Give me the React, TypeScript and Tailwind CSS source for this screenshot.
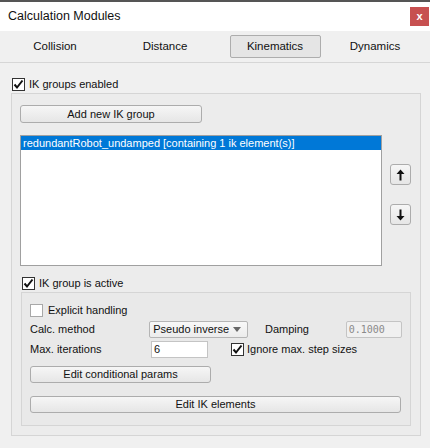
import React from 'react'

const font = { fontFamily: '"Liberation Sans", Arial, sans-serif' }

function Check({ checked }: { checked: boolean }) {
  return (
    <span className="flex h-[13px] w-[13px] shrink-0 items-center justify-center border border-[#333] bg-white">
      {checked && (
        <svg width="11" height="11" viewBox="0 0 11 11">
          <path d="M1.5 5.5 L4 8.5 L9.5 1.5" fill="none" stroke="#111" strokeWidth="2" />
        </svg>
      )}
    </span>
  )
}

function Btn({ children, className = '' }: { children: React.ReactNode; className?: string }) {
  return (
    <div
      className={
        'flex items-center justify-center rounded-[3px] border border-[#acacac] bg-gradient-to-b from-[#f6f6f6] to-[#e6e6e6] text-[11px] leading-none text-[#111] ' +
        className
      }
    >
      {children}
    </div>
  )
}

function Arrow({ up }: { up: boolean }) {
  return (
    <svg width="9" height="12" viewBox="0 0 9 12" style={{ transform: up ? 'none' : 'rotate(180deg)' }}>
      <path d="M4.5 0.5 L8.5 5 L5.5 5 L5.5 11.5 L3.5 11.5 L3.5 5 L0.5 5 Z" fill="#111" />
    </svg>
  )
}

export default function App() {
  return (
    <div className="flex h-[448px] w-[430px] flex-col border-t-2 border-[#555] bg-[#f0f0f0] text-[11px] leading-none text-[#111]" style={font}>
      {/* title bar */}
      <div className="flex h-[29px] items-center justify-between bg-white pl-[8px] pr-[1px]">
        <span className="text-[12.5px] text-[#111]">Calculation Modules</span>
        <div className="flex h-[19px] w-[19px] items-center justify-center bg-[#c75050] text-[11px] font-bold leading-none text-white">
          x
        </div>
      </div>

      {/* tabs */}
      <div className="flex h-[32px] items-center border-b border-[#d6d6d6] text-[11.5px]">
        <div className="flex w-[110px] justify-center">Collision</div>
        <div className="flex w-[110px] justify-center">Distance</div>
        <div className="flex w-[110px] justify-center">
          <div className="flex h-[23px] w-[91px] items-center justify-center rounded-[2px] border border-[#adadad] bg-[#e5e5e5]">
            Kinematics
          </div>
        </div>
        <div className="flex w-[90px] justify-center">Dynamics</div>
      </div>

      {/* content */}
      <div className="flex flex-col px-[11px] pt-[15px]">
        <label className="flex h-[13px] items-center gap-[4px] pl-[1px]">
          <Check checked />
          <span>IK groups enabled</span>
        </label>

        <div className="mt-[2px] flex h-[343px] w-[410px] flex-col border border-[#d5d5d5] bg-[#ececec] pl-[8px] pt-[11px]">
          <Btn className="h-[18px] w-[182px]">Add new IK group</Btn>

          <div className="mt-[12px] flex gap-[8px]">
            <div className="h-[131px] w-[362px] border border-[#a0a0a0] bg-white">
              <div className="h-[14px] bg-[#0078d7] pl-[2px] leading-[14px] text-white">
                redundantRobot_undamped [containing 1 ik element(s)]
              </div>
            </div>
            <div className="flex flex-col gap-[19px] pt-[29px]">
              <Btn className="h-[21px] w-[21px]">
                <Arrow up />
              </Btn>
              <Btn className="h-[21px] w-[21px]">
                <Arrow up={false} />
              </Btn>
            </div>
          </div>

          <label className="mt-[11px] flex h-[13px] items-center gap-[4px] pl-[2px]">
            <Check checked />
            <span>IK group is active</span>
          </label>

          <div className="ml-[1px] mt-[2px] flex h-[134px] w-[390px] flex-col border border-[#d5d5d5] bg-[#e9e9e9] px-[8px] pt-[11px]">
            <label className="flex h-[13px] items-center gap-[5px]">
              <span className="flex h-[13px] w-[13px] border border-[#a8a8a8] bg-white" />
              <span>Explicit handling</span>
            </label>

            <div className="mt-[4px] flex h-[17px] items-center">
              <span className="w-[121px]">Calc. method</span>
              <div className="flex h-[17px] w-[100px] items-center justify-between rounded-[2px] border border-[#b5b5b5] bg-gradient-to-b from-[#f8f8f8] to-[#ececec] pl-[3px] pr-[6px]">
                <span>Pseudo inverse</span>
                <svg width="8" height="5" viewBox="0 0 8 5">
                  <path d="M0 0 L8 0 L4 5 Z" fill="#666" />
                </svg>
              </div>
              <span className="ml-[17px] w-[82px]">Damping</span>
              <div
                className="flex h-[17px] w-[57px] items-center rounded-[2px] border border-[#c4c4c4] bg-[#f0f0f0] pl-[2px] text-[10px] text-[#8a8a8a]"
                style={{ fontFamily: '"DejaVu Sans Mono", monospace' }}
              >
                0.1000
              </div>
            </div>

            <div className="mt-[3px] flex h-[17px] items-center">
              <span className="w-[121px]">Max. iterations</span>
              <div className="flex h-[17px] w-[57px] items-center border border-[#c4c4c4] bg-white pl-[2px]">6</div>
              <label className="ml-[23px] flex items-center gap-[3px]">
                <Check checked />
                <span>Ignore max. step sizes</span>
              </label>
            </div>

            <Btn className="mt-[8px] h-[17px] w-[181px]">Edit conditional params</Btn>
            <Btn className="mt-[13px] h-[17px] w-[371px]">Edit IK elements</Btn>
          </div>
        </div>
      </div>
    </div>
  )
}
